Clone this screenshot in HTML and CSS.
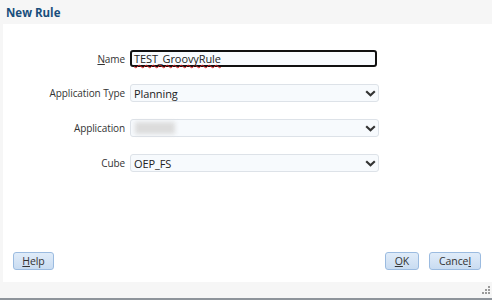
FILE: index.html
```html
<!DOCTYPE html>
<html lang="en">
<head>
    <meta charset="UTF-8">
    <title>New Rule</title>
    <link rel="stylesheet" href="styles.css">
</head>
<body>
    <div class="dialog">
        <!-- Title -->
        <div class="titlebar">New Rule</div>

        <!-- Body -->
        <div class="dialog-body">
            <div class="form">
                <label class="form-label"><u>N</u>ame</label>
                <div class="text-input"><span class="misspelled">TEST_GroovyRule</span></div>

                <label class="form-label">Application Type</label>
                <div class="select">
                    <span class="select-value">Planning</span>
                    <svg class="chevron" width="11" height="7" viewBox="0 0 11 7"><path d="M1.2 1.3 L5.5 5.2 L9.8 1.3" fill="none" stroke="#333" stroke-width="2.2"/></svg>
                </div>

                <label class="form-label">Application</label>
                <div class="select">
                    <span class="blurred"></span>
                    <svg class="chevron" width="11" height="7" viewBox="0 0 11 7"><path d="M1.2 1.3 L5.5 5.2 L9.8 1.3" fill="none" stroke="#333" stroke-width="2.2"/></svg>
                </div>

                <label class="form-label">Cube</label>
                <div class="select">
                    <span class="select-value">OEP_FS</span>
                    <svg class="chevron" width="11" height="7" viewBox="0 0 11 7"><path d="M1.2 1.3 L5.5 5.2 L9.8 1.3" fill="none" stroke="#333" stroke-width="2.2"/></svg>
                </div>
            </div>

            <!-- Buttons -->
            <div class="footer">
                <button class="btn btn-help"><u>H</u>elp</button>
                <div class="footer-right">
                    <button class="btn btn-ok"><u>O</u>K</button>
                    <button class="btn btn-cancel">Cance<u>l</u></button>
                </div>
            </div>
        </div>

        <!-- Status bar -->
        <div class="statusbar">
            <svg class="grip" width="10" height="10" viewBox="0 0 10 10">
                <rect x="8" y="0" width="2" height="2" fill="#9a9a9a"/>
                <rect x="5" y="3" width="2" height="2" fill="#9a9a9a"/>
                <rect x="8" y="3" width="2" height="2" fill="#9a9a9a"/>
                <rect x="2" y="6" width="2" height="2" fill="#9a9a9a"/>
                <rect x="5" y="6" width="2" height="2" fill="#9a9a9a"/>
                <rect x="8" y="6" width="2" height="2" fill="#9a9a9a"/>
            </svg>
        </div>
    </div>
</body>
</html>
```

FILE: styles.css
```css
* {
    margin: 0;
    padding: 0;
    box-sizing: border-box;
}

body {
    font-family: 'Open Sans', sans-serif;
    font-size: 10px;
    letter-spacing: -0.1px;
    color: #333;
    background-color: #fff;
}

.dialog {
    width: 492px;
    height: 300px;
    display: flex;
    flex-direction: column;
    background-color: #f6f6f6;
}

.titlebar {
    height: 24px;
    padding: 5px 0 0 6px;
    font-family: 'Open Sans', sans-serif;
    font-weight: 700;
    font-size: 11.5px;
    letter-spacing: 0;
    color: #184e7c;
}

.dialog-body {
    flex: 1;
    margin-left: 3px;
    background-color: #fff;
    display: flex;
    flex-direction: column;
}

.form {
    display: grid;
    grid-template-columns: 122px 249px;
    column-gap: 5px;
    row-gap: 17px;
    padding-top: 26px;
    align-items: center;
}

.form-label {
    text-align: right;
    color: #333;
}

.form-label u {
    text-decoration-thickness: 1px;
}

.text-input {
    width: 247px;
    height: 17px;
    border: 2px solid #111;
    border-radius: 3px;
    background-color: #f8fbfe;
    padding: 0 2px;
    line-height: 13px;
    font-size: 11px;
    color: #222;
}

.misspelled {
    text-decoration: underline wavy #e02020;
    text-decoration-thickness: 1px;
    text-underline-offset: 1px;
    text-decoration-skip-ink: none;
}

.select {
    height: 18px;
    border: 1px solid #dde2e8;
    border-radius: 3px;
    background-color: #f7fafd;
    display: flex;
    align-items: center;
    justify-content: space-between;
    padding: 0 2px 0 3px;
}

.select-value {
    font-size: 11px;
    color: #222;
}

.blurred {
    width: 40px;
    height: 12px;
    margin-left: 1px;
    background-color: #dcdcdc;
    filter: blur(2px);
}

.footer {
    margin-top: auto;
    display: flex;
    justify-content: space-between;
    padding: 0 11px 12px 10px;
}

.footer-right {
    display: flex;
    gap: 10px;
}

.btn {
    height: 18px;
    font-family: 'Open Sans', sans-serif;
    font-size: 10.5px;
    letter-spacing: -0.1px;
    color: #333;
    border: 1px solid #9bbbe0;
    border-radius: 3px;
    background: linear-gradient(#e0ecf9, #c9dcf1);
    line-height: 15px;
}

.btn-help {
    width: 41px;
}

.btn-ok {
    width: 34px;
}

.btn-cancel {
    width: 52px;
}

.statusbar {
    height: 18px;
    border-bottom: 2px solid #8e949b;
    display: flex;
    justify-content: flex-end;
    align-items: flex-end;
    padding: 0 2px 2px 0;
}
```
